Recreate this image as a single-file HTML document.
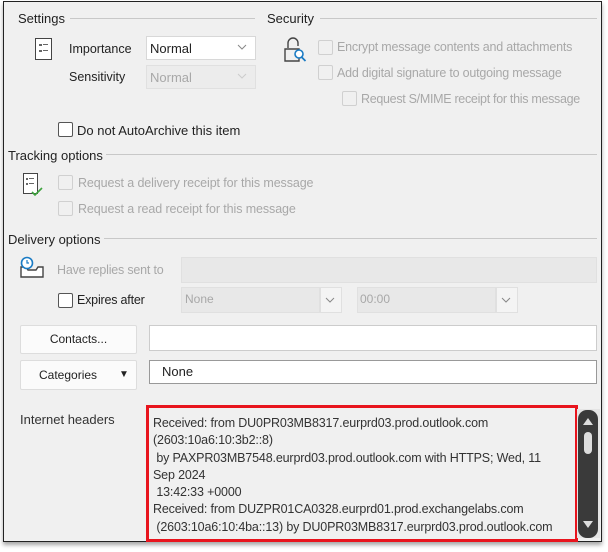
<!DOCTYPE html>
<html><head><style>
body{margin:0;width:608px;height:552px;background:#fff;position:relative;overflow:hidden;font-family:"Liberation Sans",sans-serif;font-size:12px;color:#222}
.frame{position:absolute;left:3px;top:1px;width:597px;height:539px;background:#f0f0f0;border:1.5px solid #222;box-shadow:0 3px 4px rgba(0,0,0,.35)}
.a{position:absolute;white-space:nowrap}
.line{position:absolute;height:1px;background:#c8c8c8}
.cb{position:absolute;width:13px;height:13px;border:1px solid #d0d0d0;border-radius:2px;background:#f0f0f0}
.cb.on{border-color:#555;background:#fff}
.g{color:#a8a8a8}
.box{position:absolute;background:#fff;border:1px solid #d8d8d8}
.dis{position:absolute;background:#e8e8e8;border:1px solid #e0e0e0}
.btn{position:absolute;background:#fbfbfb;border:1px solid #ddd;border-radius:2px;text-align:center}
.chev{position:absolute}
</style></head><body>
<div class="frame"></div>
<div class="a" style="left:18px;top:11px;font-size:13px">Settings</div>
<div class="line" style="left:70px;top:18px;width:185px"></div>
<div class="a" style="left:267px;top:11px;font-size:13px">Security</div>
<div class="line" style="left:320px;top:18px;width:277px"></div>

<svg class="a" style="left:34px;top:37px" width="20" height="24"><rect x="1.5" y="1.5" width="16" height="21" fill="#fff" stroke="#444"/><rect x="5" y="7" width="3" height="2" fill="#666"/><rect x="9" y="7" width="5" height="1" fill="#666"/><rect x="5" y="13" width="3" height="2" fill="#666"/><rect x="9" y="13" width="5" height="1" fill="#666"/></svg>
<div class="a" style="left:69px;top:42px;font-size:12.5px">Importance</div>
<div class="box" style="left:146px;top:36px;width:108px;height:22px"></div>
<div class="a" style="left:150px;top:41px;font-size:13px">Normal</div>
<svg class="chev" style="left:237px;top:44px" width="10" height="6"><path d="M1 1l4 4 4-4" fill="none" stroke="#888"/></svg>
<div class="a" style="left:69px;top:70px;font-size:12.5px">Sensitivity</div>
<div class="dis" style="left:146px;top:65px;width:108px;height:22px;background:#ececec"></div>
<div class="a g" style="left:150px;top:70px;font-size:13px">Normal</div>
<svg class="chev" style="left:237px;top:73px" width="10" height="6"><path d="M1 1l4 4 4-4" fill="none" stroke="#ccc"/></svg>
<div class="cb on" style="left:58px;top:122px"></div>
<div class="a" style="left:77px;top:123px;font-size:13px">Do not AutoArchive this item</div>

<svg class="a" style="left:282px;top:36px" width="26" height="28"><path d="M6 12V7a5 5 0 0 1 10 0v3" fill="none" stroke="#444" stroke-width="1.4"/><path d="M3 13h14v12H3z" fill="none" stroke="#444" stroke-width="1.4"/><circle cx="17" cy="18" r="4" fill="#fff" stroke="#1a7bc4" stroke-width="1.6"/><path d="M19.5 21l4 4" stroke="#1a7bc4" stroke-width="1.8"/></svg>
<div class="cb" style="left:318px;top:40px"></div>
<div class="a g" style="left:337px;top:40px;font-size:12.5px;letter-spacing:-0.2px">Encrypt message contents and attachments</div>
<div class="cb" style="left:318px;top:65px"></div>
<div class="a g" style="left:337px;top:66px;font-size:12.5px;letter-spacing:-0.2px">Add digital signature to outgoing message</div>
<div class="cb" style="left:342px;top:91px"></div>
<div class="a g" style="left:361px;top:92px;font-size:12.5px;letter-spacing:-0.3px">Request S/MIME receipt for this message</div>

<div class="a" style="left:8px;top:148px;font-size:13px">Tracking options</div>
<div class="line" style="left:106px;top:154px;width:491px"></div>
<svg class="a" style="left:22px;top:172px" width="24" height="26"><rect x="1.5" y="1.5" width="14" height="20" fill="#fff" stroke="#444"/><rect x="4" y="6" width="2" height="2" fill="#666"/><rect x="7" y="6" width="5" height="1" fill="#666"/><rect x="4" y="11" width="2" height="2" fill="#666"/><rect x="7" y="11" width="5" height="1" fill="#666"/><path d="M10 20l3 3 7-7" fill="none" stroke="#3ea33e" stroke-width="1.6"/></svg>
<div class="cb" style="left:58px;top:175px"></div>
<div class="a g" style="left:78px;top:176px;font-size:12.5px;letter-spacing:-0.1px">Request a delivery receipt for this message</div>
<div class="cb" style="left:58px;top:201px"></div>
<div class="a g" style="left:78px;top:202px;font-size:12.5px;letter-spacing:-0.1px">Request a read receipt for this message</div>

<div class="a" style="left:8px;top:232px;font-size:13px">Delivery options</div>
<div class="line" style="left:104px;top:238px;width:493px"></div>
<svg class="a" style="left:18px;top:256px" width="28" height="24"><path d="M3 11h5l2 3h8l2-3h5v10H3z" fill="#fff" stroke="#444" stroke-width="1.4"/><circle cx="9" cy="7" r="5.5" fill="#fff" stroke="#1a7bc4" stroke-width="1.6"/><path d="M9 4v3h2" fill="none" stroke="#1a7bc4" stroke-width="1.2"/></svg>
<div class="a g" style="left:57px;top:263px;font-size:12.5px;letter-spacing:-0.2px">Have replies sent to</div>
<div class="dis" style="left:181px;top:257px;width:414px;height:24px"></div>
<div class="cb on" style="left:58px;top:293px"></div>
<div class="a" style="left:77px;top:293px;font-size:12.5px;letter-spacing:-0.2px">Expires after</div>
<div class="dis" style="left:181px;top:287px;width:137px;height:24px"></div>
<div class="a g" style="left:185px;top:292px">None</div>
<div class="dis" style="left:320px;top:287px;width:20px;height:24px;background:#f4f4f4"></div>
<svg class="chev" style="left:325px;top:297px" width="10" height="6"><path d="M1 1l4 4 4-4" fill="none" stroke="#888"/></svg>
<div class="dis" style="left:357px;top:287px;width:137px;height:24px"></div>
<div class="a g" style="left:360px;top:292px">00:00</div>
<div class="dis" style="left:496px;top:287px;width:20px;height:24px;background:#f4f4f4"></div>
<svg class="chev" style="left:501px;top:297px" width="10" height="6"><path d="M1 1l4 4 4-4" fill="none" stroke="#888"/></svg>

<div class="btn" style="left:20px;top:325px;width:115px;height:27px;line-height:27px">Contacts...</div>
<div class="box" style="left:149px;top:325px;width:446px;height:24px;border-color:#ccc"></div>
<div class="btn" style="left:20px;top:360px;width:115px;height:28px;line-height:28px;text-align:left"><span style="margin-left:18px">Categories</span><span style="position:absolute;left:98px;top:0;font-size:10px">&#9660;</span></div>
<div class="box" style="left:149px;top:360px;width:446px;height:22px;border-color:#999"></div>
<div class="a" style="left:162px;top:364px;font-size:13px">None</div>

<div class="a" style="left:20px;top:412px;font-size:13px;color:#333">Internet headers</div>
<div style="position:absolute;left:146px;top:405px;width:426px;height:131px;border:3px solid #e8141d;background:#f0f0f0;overflow:hidden">
<div style="padding:7px 0 0 4px;font-size:12.5px;line-height:17.3px;color:#333;white-space:nowrap;letter-spacing:-0.15px">Received: from DU0PR03MB8317.eurprd03.prod.outlook.com<br>(2603:10a6:10:3b2::8)<br>&nbsp;by PAXPR03MB7548.eurprd03.prod.outlook.com with HTTPS; Wed, 11<br>Sep 2024<br>&nbsp;13:42:33 +0000<br>Received: from DUZPR01CA0328.eurprd01.prod.exchangelabs.com<br>&nbsp;(2603:10a6:10:4ba::13) by DU0PR03MB8317.eurprd03.prod.outlook.com</div></div>
<div style="position:absolute;left:577px;top:409px;width:23px;height:129px;background:#e4e4e4"></div>
<div style="position:absolute;left:578px;top:410px;width:20px;height:128px;background:#3a3a3a;border-radius:9px"></div>
<svg class="a" style="left:582px;top:416px" width="12" height="10"><path d="M1 9L6 2l5 7z" fill="#ddd"/></svg>
<div style="position:absolute;left:584px;top:432px;width:8px;height:22px;background:#ddd;border-radius:4px"></div>
<svg class="a" style="left:582px;top:520px" width="12" height="10"><path d="M1 1l5 7 5-7z" fill="#ddd"/></svg>
</body></html>
